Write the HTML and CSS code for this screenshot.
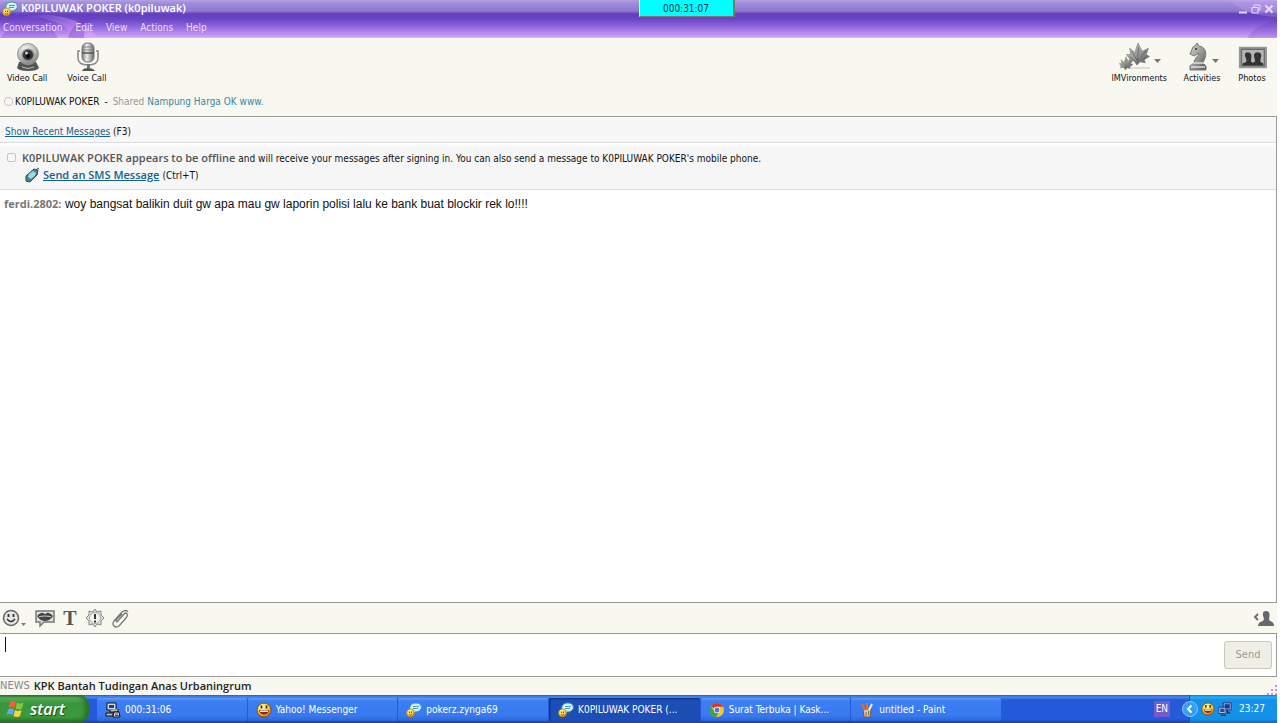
FILE: index.html
```html
<!DOCTYPE html>
<html lang="id">
<head>
<meta charset="utf-8">
<title>K0PILUWAK POKER (k0piluwak)</title>
<link rel="stylesheet" href="styles.css">
</head>
<body>
<svg class="defs" aria-hidden="true">
  <defs>
    <linearGradient id="metal" x1="0" y1="0" x2="1" y2="1"><stop offset="0" stop-color="#d4d4d4"/><stop offset=".5" stop-color="#999"/><stop offset="1" stop-color="#555"/></linearGradient>
    <linearGradient id="tube" x1="0" x2="1"><stop offset="0" stop-color="#777"/><stop offset=".4" stop-color="#eee"/><stop offset="1" stop-color="#666"/></linearGradient>
    <radialGradient id="ball" cx=".4" cy=".3" r=".8"><stop offset="0" stop-color="#fafafa"/><stop offset=".6" stop-color="#b5b5b5"/><stop offset="1" stop-color="#666"/></radialGradient>
    <radialGradient id="gold" cx=".4" cy=".3" r=".8"><stop offset="0" stop-color="#fff9a0"/><stop offset=".6" stop-color="#f6c62c"/><stop offset="1" stop-color="#b35e08"/></radialGradient>
    <linearGradient id="petal" x1="0" y1="0" x2="1" y2="0"><stop offset="0" stop-color="#e0a6ff" stop-opacity="0"/><stop offset="1" stop-color="#e0a6ff" stop-opacity=".6"/></linearGradient>
    <symbol id="chat" viewBox="0 0 16 16">
      <path d="M4 8C3 4 5 1 10 1c6 0 7 6 3 8-1 1-3 1-4 1l-2 3-1-4z" fill="#d2f1f5" stroke="#3d93a5"/>
      <path d="M7 4.500h6M7 6.500h5" stroke="#4c9fb0"/>
      <circle cx="4.500" cy="11" r="4" fill="url(#gold)" stroke="#a87418" stroke-width=".6"/>
      <path d="M3.500 9.500v1.500M5.500 9.500v1.500" stroke="#513000" stroke-width=".8"/><path d="M3 12.500q1.500 1 3 0" stroke="#513000" stroke-width=".6" fill="none"/>
    </symbol>
    <symbol id="grin" viewBox="0 0 16 16">
      <circle cx="8" cy="8" r="7" fill="url(#gold)" stroke="#87500c"/>
      <path d="M3 8h10c0 6-10 6-10 0z" fill="#9c211b"/><path d="M4 8.500h8v1.500H4z" fill="#fff"/>
      <path d="M5.500 3.500v3M10.500 3.500v3" stroke="#412000" stroke-width="1.600"/>
    </symbol>
    <symbol id="monitors" viewBox="0 0 16 16">
      <path d="M6 1h9v8H6z" fill="#b8bfd0" stroke="#222b50"/><path d="M7.500 2.500h6v5h-6z" fill="#1834aa"/>
      <path d="M1 6h8v7H1z" fill="#d5d9e4" stroke="#222b50"/><path d="M2.500 7.500h5v4h-5z" fill="#2440c0"/>
      <path d="M3 15h6M11 9.500v3h3" stroke="#252c4c" fill="none" stroke-width="1.500"/>
    </symbol>
    <symbol id="dialer" viewBox="0 0 16 16">
      <path d="M2 1h9v7H2z" fill="#d8d8d0" stroke="#111"/><path d="M4 3h5v3H4z" fill="#1540a8"/>
      <path d="M5 8v2h8V7M1 14V11h7v3z" fill="#bbb" stroke="#111"/><path d="M9 10h5l1 5H8z" fill="#ddd" stroke="#111"/><path d="M10 12h3M10 13.500h4" stroke="#555"/>
    </symbol>
    <symbol id="leaf" viewBox="0 0 24 24">
      <path d="M11 22 8 18 3 19l1-3-3-4 4 0-1-6 5 4 3-9 4 8 6-3-2 6 3 2-5 3 1 3-5-1z" fill="url(#metal)" stroke="#777" stroke-width=".6"/>
      <path d="M11 22 12.500 5M11.500 18 6 9M11.500 18 20 8M11 20l-7-6M11 20l9-6" stroke="#5c5c5c" stroke-width=".7" fill="none"/>
    </symbol>
  </defs>
</svg>

<div class="window">
  <header class="head">
    <svg class="swirl" viewBox="0 0 110 38" aria-hidden="true"><path d="M0 38C8 28 16 19 30 15c10 2 22 12 28 23z" fill="#8445d0" opacity=".35"/><path d="M26 17C40 12 80 14 98 38H76C66 26 52 17 26 17z" fill="url(#petal)"/><path d="M68 38c4-12 10-18 24-24-4 8-8 16-8 24z" fill="#7434c4" opacity=".35"/></svg>
    <svg class="swirl swirl-right" viewBox="0 0 50 38" aria-hidden="true"><path d="M3 0c8 9 22 16 47 17V0z" fill="#d8b5ff" opacity=".25"/><path d="M20 38c6-9 14-14 30-18v18z" fill="#6930b5" opacity=".2"/></svg>
    <div class="timer">000:31:07</div>
    <div class="titlebar">
      <svg class="ic16"><use href="#chat"/></svg>
      <h1>K0PILUWAK POKER (k0piluwak)</h1>
      <div class="winbtns">
        <button aria-label="Minimize"><svg viewBox="0 0 10 10"><path d="M1 8.500h8" stroke-width="2"/></svg></button>
        <button aria-label="Restore"><svg viewBox="0 0 10 10"><path d="M3 3V1h6v5H7M1 3.500h6V9H1z"/></svg></button>
        <button aria-label="Close"><svg viewBox="0 0 10 10"><path d="m1.500 1.500 7 7m0-7-7 7" stroke-width="2"/></svg></button>
      </div>
    </div>
    <nav class="menu"><button>Conversation</button><button>Edit</button><button>View</button><button>Actions</button><button>Help</button></nav>
  </header>

  <div class="tools">
    <button class="tool tool-left">
      <svg viewBox="0 0 28 30"><path d="M6 20h17l3 6q-2 3-11 3T4 26z" fill="#555"/><path d="M9 25q6 3 12 0" stroke="#bbb" fill="none"/><circle cx="15" cy="12" r="10.500" fill="url(#ball)" stroke="#999"/><circle cx="15" cy="13" r="6.500" fill="#888"/><circle cx="15" cy="13" r="5" fill="#333"/><circle cx="15" cy="14" r="2" fill="#000"/><circle cx="13.500" cy="11" r="1.500" fill="#ccc"/></svg>
      <span>Video Call</span>
    </button>
    <button class="tool tool-left">
      <svg viewBox="0 0 28 30"><path d="M7 9H5v7q0 7 10 7t10-7V9h-2" stroke="#888" stroke-width="1.500" fill="none"/><rect x="9" y="1" width="12" height="19" rx="5" fill="url(#tube)" stroke="#777"/><path d="M10 5h10M10 8h10" stroke="#888"/><path d="M9 11h12" stroke="#555" stroke-width="1.500"/><path d="M14 22h3v4h-3z" fill="#777"/><path d="M9 29q1-3 6-3t7 3z" fill="#555"/></svg>
      <span>Voice Call</span>
    </button>
    <button class="tool push">
      <svg class="wide" viewBox="0 0 48 30"><path d="M16 26h19" stroke="#dedbd2" stroke-width="2"/><use href="#leaf" x="9" y="0" width="28" height="25"/><use href="#leaf" x="3" y="14" width="16" height="15"/><path d="M39 17h7l-3.500 4z" fill="#777"/></svg>
      <span>IMVironments</span>
    </button>
    <button class="tool">
      <svg class="wide" viewBox="0 0 48 30"><path d="M17 4l2-3 2 3c6 1 8 6 6 12l-2 5 3 3v4H12v-4l4-3c0-5 5-7 5-10l-5 3-4-2 3-7z" fill="url(#metal)" stroke="#777"/><path d="M15 21h11M13 25h14" stroke="#ddd" stroke-width="1.500"/><circle cx="18" cy="7" r="1" fill="#333"/><path d="M34 17h7l-3.500 4z" fill="#777"/></svg>
      <span>Activities</span>
    </button>
    <button class="tool">
      <svg viewBox="0 0 32 30"><path d="M3 5h28v21H3z" fill="#777" stroke="#999" stroke-width="2"/><path d="M5 7h24v17H5z" fill="#b5b5b5" stroke="#666"/><path d="M6 24v-2l4-2v-2q-4-8 1.500-8t3.500 8v2l2 1 2-1v-2q-3-8 3-8t3 8v2l3 2v2z" fill="#333"/></svg>
      <span>Photos</span>
    </button>
  </div>
  <div class="status"><i class="dot"></i><span>K0PILUWAK POKER</span><span class="dash">-</span><span class="grey">Shared <a href="#">Nampung Harga OK www.</a></span></div>

  <main class="chat">
    <p class="recent"><a href="#">Show Recent Messages</a> (F3)</p>
    <div class="notice">
      <i class="dot"></i>
      <div>
        <p><b>K0PILUWAK POKER appears to be offline</b> and will receive your messages after signing in. You can also send a message to K0PILUWAK POKER's mobile phone.</p>
        <p class="sms"><svg class="ic16" viewBox="0 0 16 16"><path d="m2 9 8-7 4 1-1 5-7 7-4-1z" fill="#527f8b" stroke="#294b55"/><path d="m5 7 4-3 3 2-1 3-4 3-3-2z" fill="#8edde7"/><path d="m7 14 7-8M13 1l2 1" stroke="#555"/></svg><a href="#">Send an SMS Message</a> (Ctrl+T)</p>
      </div>
    </div>
    <p class="message"><b>ferdi.2802:</b> <span>woy bangsat balikin duit gw apa mau gw laporin polisi lalu ke bank buat blockir rek lo!!!!</span></p>
  </main>

  <div class="format">
    <button class="emoticons" aria-label="Emoticons"><svg viewBox="0 0 24 20"><circle cx="9" cy="10" r="7.500" fill="#e6e6e6" stroke="#666" stroke-width="1.500"/><path d="M6.500 6v3M11.500 6v3" stroke="#333" stroke-width="1.800"/><path d="M5 11q4 5 8 0" fill="none" stroke="#333" stroke-width="1.500"/><path d="M19 15h5l-2.500 3z" fill="#777"/></svg></button>
    <button aria-label="Audibles"><svg viewBox="0 0 24 20"><path d="M3 3h18v11H11l-4 4v-4H3z" fill="#e2e2e2" stroke="#777" stroke-width="1.500"/><path d="M4 8q4-4 6-3l2 1 2-1q2-1 6 3-3 5-8 5T4 8z" fill="#444"/><path d="M6 8.500q6-1 12 0" stroke="#ccc" fill="none"/></svg></button>
    <button class="letter" aria-label="Text format">T</button>
    <button aria-label="Buzz"><svg viewBox="0 0 24 20"><path d="m12 1 2 3 4-1v4l3 3-3 3v4l-4-1-2 3-2-3-4 1v-4l-3-3 3-3V3l4 1z" fill="#ddd" stroke="#888"/><circle cx="12" cy="10" r="5.500" fill="#f2f2f2" stroke="#aaa"/><path d="M12 6v5M12 12.500v2" stroke="#333" stroke-width="2"/></svg></button>
    <button aria-label="Attach"><svg viewBox="0 0 24 20"><path d="m9 14 7-8q2-2 3 0t-1 4l-7 8q-3 2-5 0t0-5l8-9q4-3 6 0M9 14q-2-1 0-3l5-5" fill="none" stroke="#777" stroke-width="1.300"/></svg></button>
    <button class="push" aria-label="Display picture"><svg viewBox="0 0 24 20"><path d="M7 6 4 9l3 3" fill="none" stroke="#666" stroke-width="1.800"/><path d="M7 18q0-4 5-5l1-2q-3-8 2-8t3 8l1 2q4 1 4 5z" fill="#68686c"/></svg></button>
  </div>
  <div class="compose">
    <div class="field"><textarea aria-label="Message"></textarea><i class="caret"></i></div>
    <button class="send" disabled>Send</button>
  </div>
  <div class="news"><span>NEWS</span><b>KPK Bantah Tudingan Anas Urbaningrum</b><svg class="grip" viewBox="0 0 10 10"><path d="M8 0h2v2H8zM4 4h2v2H4zM8 4h2v2H8zM0 8h2v2H0zM4 8h2v2H4zM8 8h2v2H8z" fill="#cf91d8"/></svg></div>

  <footer class="taskbar">
    <button class="start"><svg viewBox="0 0 20 18"><path d="M4 2q3-2 6 0L8.500 8q-3-2-6 0z" fill="#f0622e"/><path d="M11 2.500q3 2 6.500 0L16 8.500q-3 2-6.500 0z" fill="#86c742"/><path d="M2 9.500q3-2 6 0L6.500 15q-3-2-6 0z" fill="#69a5f5"/><path d="M9 10q3 2 6.500 0L14 16q-3 2-6.500 0z" fill="#fbd33c"/></svg>start</button>
    <div class="tasks">
      <button><svg class="ic16"><use href="#dialer"/></svg><span>000:31:06</span></button>
      <button><svg class="ic16"><use href="#grin"/></svg><span>Yahoo! Messenger</span></button>
      <button><svg class="ic16"><use href="#chat"/></svg><span>pokerz.zynga69</span></button>
      <button class="active"><svg class="ic16"><use href="#chat"/></svg><span>K0PILUWAK POKER (...</span></button>
      <button><svg class="ic16" viewBox="0 0 16 16"><circle cx="8" cy="8" r="7" fill="#f4c628"/><path d="M8 8 2 4.300A7 7 0 0 1 14.200 4.800H8z" fill="#d9392b"/><path d="M2 4.300A7 7 0 0 0 7 15l3.500-5.500L5 9z" fill="#38a24a"/><circle cx="8" cy="8" r="3.200" fill="#fff"/><circle cx="8" cy="8" r="2.500" fill="#447ddb"/></svg><span>Surat Terbuka | Kask...</span></button>
      <button><svg class="ic16" viewBox="0 0 16 16"><path d="M4 7h8l-1 8H5z" fill="#d3c7b0" stroke="#725c41"/><path d="m6 8-3-6M8 8V1" stroke="#d96d33" stroke-width="2"/><path d="m10 8 3-6" stroke="#eee" stroke-width="2"/><path d="M7 10v4M9.500 9v4" stroke="#936b3c"/></svg><span>untitled - Paint</span></button>
    </div>
    <span class="lang">EN</span>
    <div class="tray">
      <button class="expand" aria-label="Show hidden icons"><svg viewBox="0 0 16 16"><circle cx="8" cy="8" r="7.500" fill="#3b9df2" stroke="#80c6fa"/><path d="M9.500 4.500 6 8l3.500 3.500" fill="none" stroke="#fff" stroke-width="2"/></svg></button>
      <svg class="tray-icon"><use href="#grin"/></svg><svg class="tray-icon"><use href="#monitors"/></svg>
      <time>23:27</time>
    </div>
  </footer>
</div>
</body>
</html>
```
FILE: styles.css
```css
* { box-sizing: border-box; }
body { margin: 0; padding-right: 3px; background: #fff; color: #111; font: 10px/16px "DejaVu Sans Condensed", "DejaVu Sans", sans-serif; }
p, h1 { margin: 0; }
h1, b, .sms a { font: 600 11px/16px "Open Sans", sans-serif; }
button { margin: 0; padding: 0; border: 0; background: none; color: inherit; font: inherit; }
svg { display: block; flex: none; }
.defs { position: absolute; width: 0; height: 0; }
.ic16 { width: 16px; height: 16px; }
.push { margin-left: auto; }
.window { display: flex; flex-direction: column; min-height: 100vh; background: #f8f7f0; }

.head { position: relative; height: 38px; background: linear-gradient(#b3a2e2 0, #a08cdb 3px, #8e77d0 11px, #643dba 14px, #6945c4 19px, #9268df 27px, #c79af5 36px, #dfb9fa 38px); color: #fff; }
.swirl { position: absolute; left: 0; top: 0; width: 110px; height: 38px; }
.swirl-right { left: auto; right: 0; width: 50px; }
.timer { position: absolute; left: 50%; top: 0; width: 96px; height: 17px; border: solid #777; border-width: 0 2px 1px 1px; border-left-color: #eee; background: #0ff; color: #134; text-align: center; line-height: 18px; }
.titlebar { position: relative; display: flex; align-items: center; gap: 3px; height: 18px; padding: 0 3px 0 2px; }
.titlebar h1 { padding-bottom: 3px; }
.winbtns { display: flex; gap: 3px; margin-left: auto; }
.winbtns svg { width: 10px; height: 10px; fill: none; stroke: #e6d9ff; }
.menu { position: relative; display: flex; gap: 13px; padding: 2px 3px; color: #ecdcff; }

.tools { display: flex; gap: 11px; height: 52px; padding: 4px 10px 0 7px; }
.tool { display: flex; flex-direction: column; align-items: center; font-size: 9px; line-height: 12px; }
.tool svg { width: 30px; height: 30px; }
.tool svg.wide { width: 48px; }
.tool-left { margin-right: 9px; }
.status { display: flex; align-items: center; height: 26px; padding: 0 4px 3px; }
.dot { flex: none; width: 9px; height: 9px; margin-right: 2px; border: 1px solid #c5c5c5; border-radius: 4px; background: #f8f8f8; }
.dash { margin: 0 5px; }
.grey { color: #999; }
.status a { color: #3987a5; text-decoration: none; }

.chat { flex: 1; border: solid #999; border-width: 1px 1px 1px 0; background: #fff; }
.chat a { color: #146292; }
.recent { padding: 7px 5px 2px; border-bottom: 1px solid #ddd; background: #f7f7f7; }
.notice { display: flex; gap: 4px; padding: 7px 7px 5px; border-bottom: 1px solid #ddd; background: linear-gradient(#fff 0, #f6f6f6 6px); line-height: 17px; }
.notice .dot { margin-top: 3px; border-radius: 2px; }
.notice b { color: #555; }
.sms { display: flex; gap: 3px; padding-left: 2px; }
.message { padding: 6px 4px; font-size: 12px; }
.message b { color: #777; font-weight: bold; }
.message span { font-family: "Liberation Sans", sans-serif; }

.format { display: flex; align-items: center; gap: 1px; height: 30px; padding: 0 2px; }
.format svg { width: 24px; height: 20px; }
.format .emoticons { width: 30px; }
.format .letter { width: 24px; color: #555; font: bold 20px/20px "Liberation Serif", serif; }
.compose { display: flex; align-items: center; height: 44px; padding-right: 4px; border: solid #999; border-width: 1px 1px 1px 0; background: #fff; }
.field { position: relative; flex: 1; align-self: stretch; }
.field textarea { display: block; width: 100%; height: 100%; border: 0; padding: 4px; resize: none; outline: 0; background: none; }
.caret { position: absolute; left: 5px; top: 3px; width: 1px; height: 15px; background: #111; }
.send { width: 48px; height: 28px; border: 1px solid #c9c8bb; border-radius: 3px; background: #f0efe6; color: #999; font-size: 11px; }
.news { display: flex; align-items: center; gap: 4px; height: 18px; color: #888; }
.news span { font-size: 11px; }
.news b { color: #222; }
.grip { width: 10px; height: 10px; margin-left: auto; align-self: flex-end; }

.taskbar { display: flex; height: 28px; background: linear-gradient(#2458bd 0, #438cf5 2px, #245ad8 5px, #245bdc 24px, #1941a5 28px); color: #fff; }
.start { display: flex; align-items: center; gap: 4px; width: 89px; margin-right: 8px; padding-left: 6px; border-radius: 0 10px 10px 0; background: linear-gradient(#276c28 0, #5bb05b 3px, #3a963b 8px, #3c993d 22px, #236b25 28px); box-shadow: inset -4px 0 5px #276f2a; font: italic 600 16px/24px "Open Sans", sans-serif; text-shadow: 1px 1px 1px #194b1a; }
.start svg { width: 20px; height: 18px; }
.tasks { display: flex; flex: 0 1 904px; gap: 1px; padding: 3px 0 2px; min-width: 0; }
.tasks button { display: flex; flex: 1; align-items: center; gap: 4px; min-width: 0; padding-left: 8px; border-radius: 2px; background: linear-gradient(#669cff 0, #3c7ff3 3px, #3879ee 18px, #2866d8 100%); white-space: nowrap; }
.tasks .active { padding-left: 9px; background: #1d4eb5; box-shadow: inset 1px 1px 2px #0e2f7e; }
.lang { align-self: center; margin-left: auto; padding: 0 2px; background: #735bcb; }
.tray { display: flex; align-items: center; gap: 3px; margin-left: 19px; padding-right: 12px; background: linear-gradient(#1870d0 0, #25b0f8 2px, #1591e9 5px, #1391e9 24px, #1069c0 28px); border-left: 1px solid #0d55b5; }
.expand { margin-left: -8px; }
.expand svg { width: 16px; height: 16px; }
.tray-icon { width: 14px; height: 14px; }
.tray time { margin-left: 4px; }
```
